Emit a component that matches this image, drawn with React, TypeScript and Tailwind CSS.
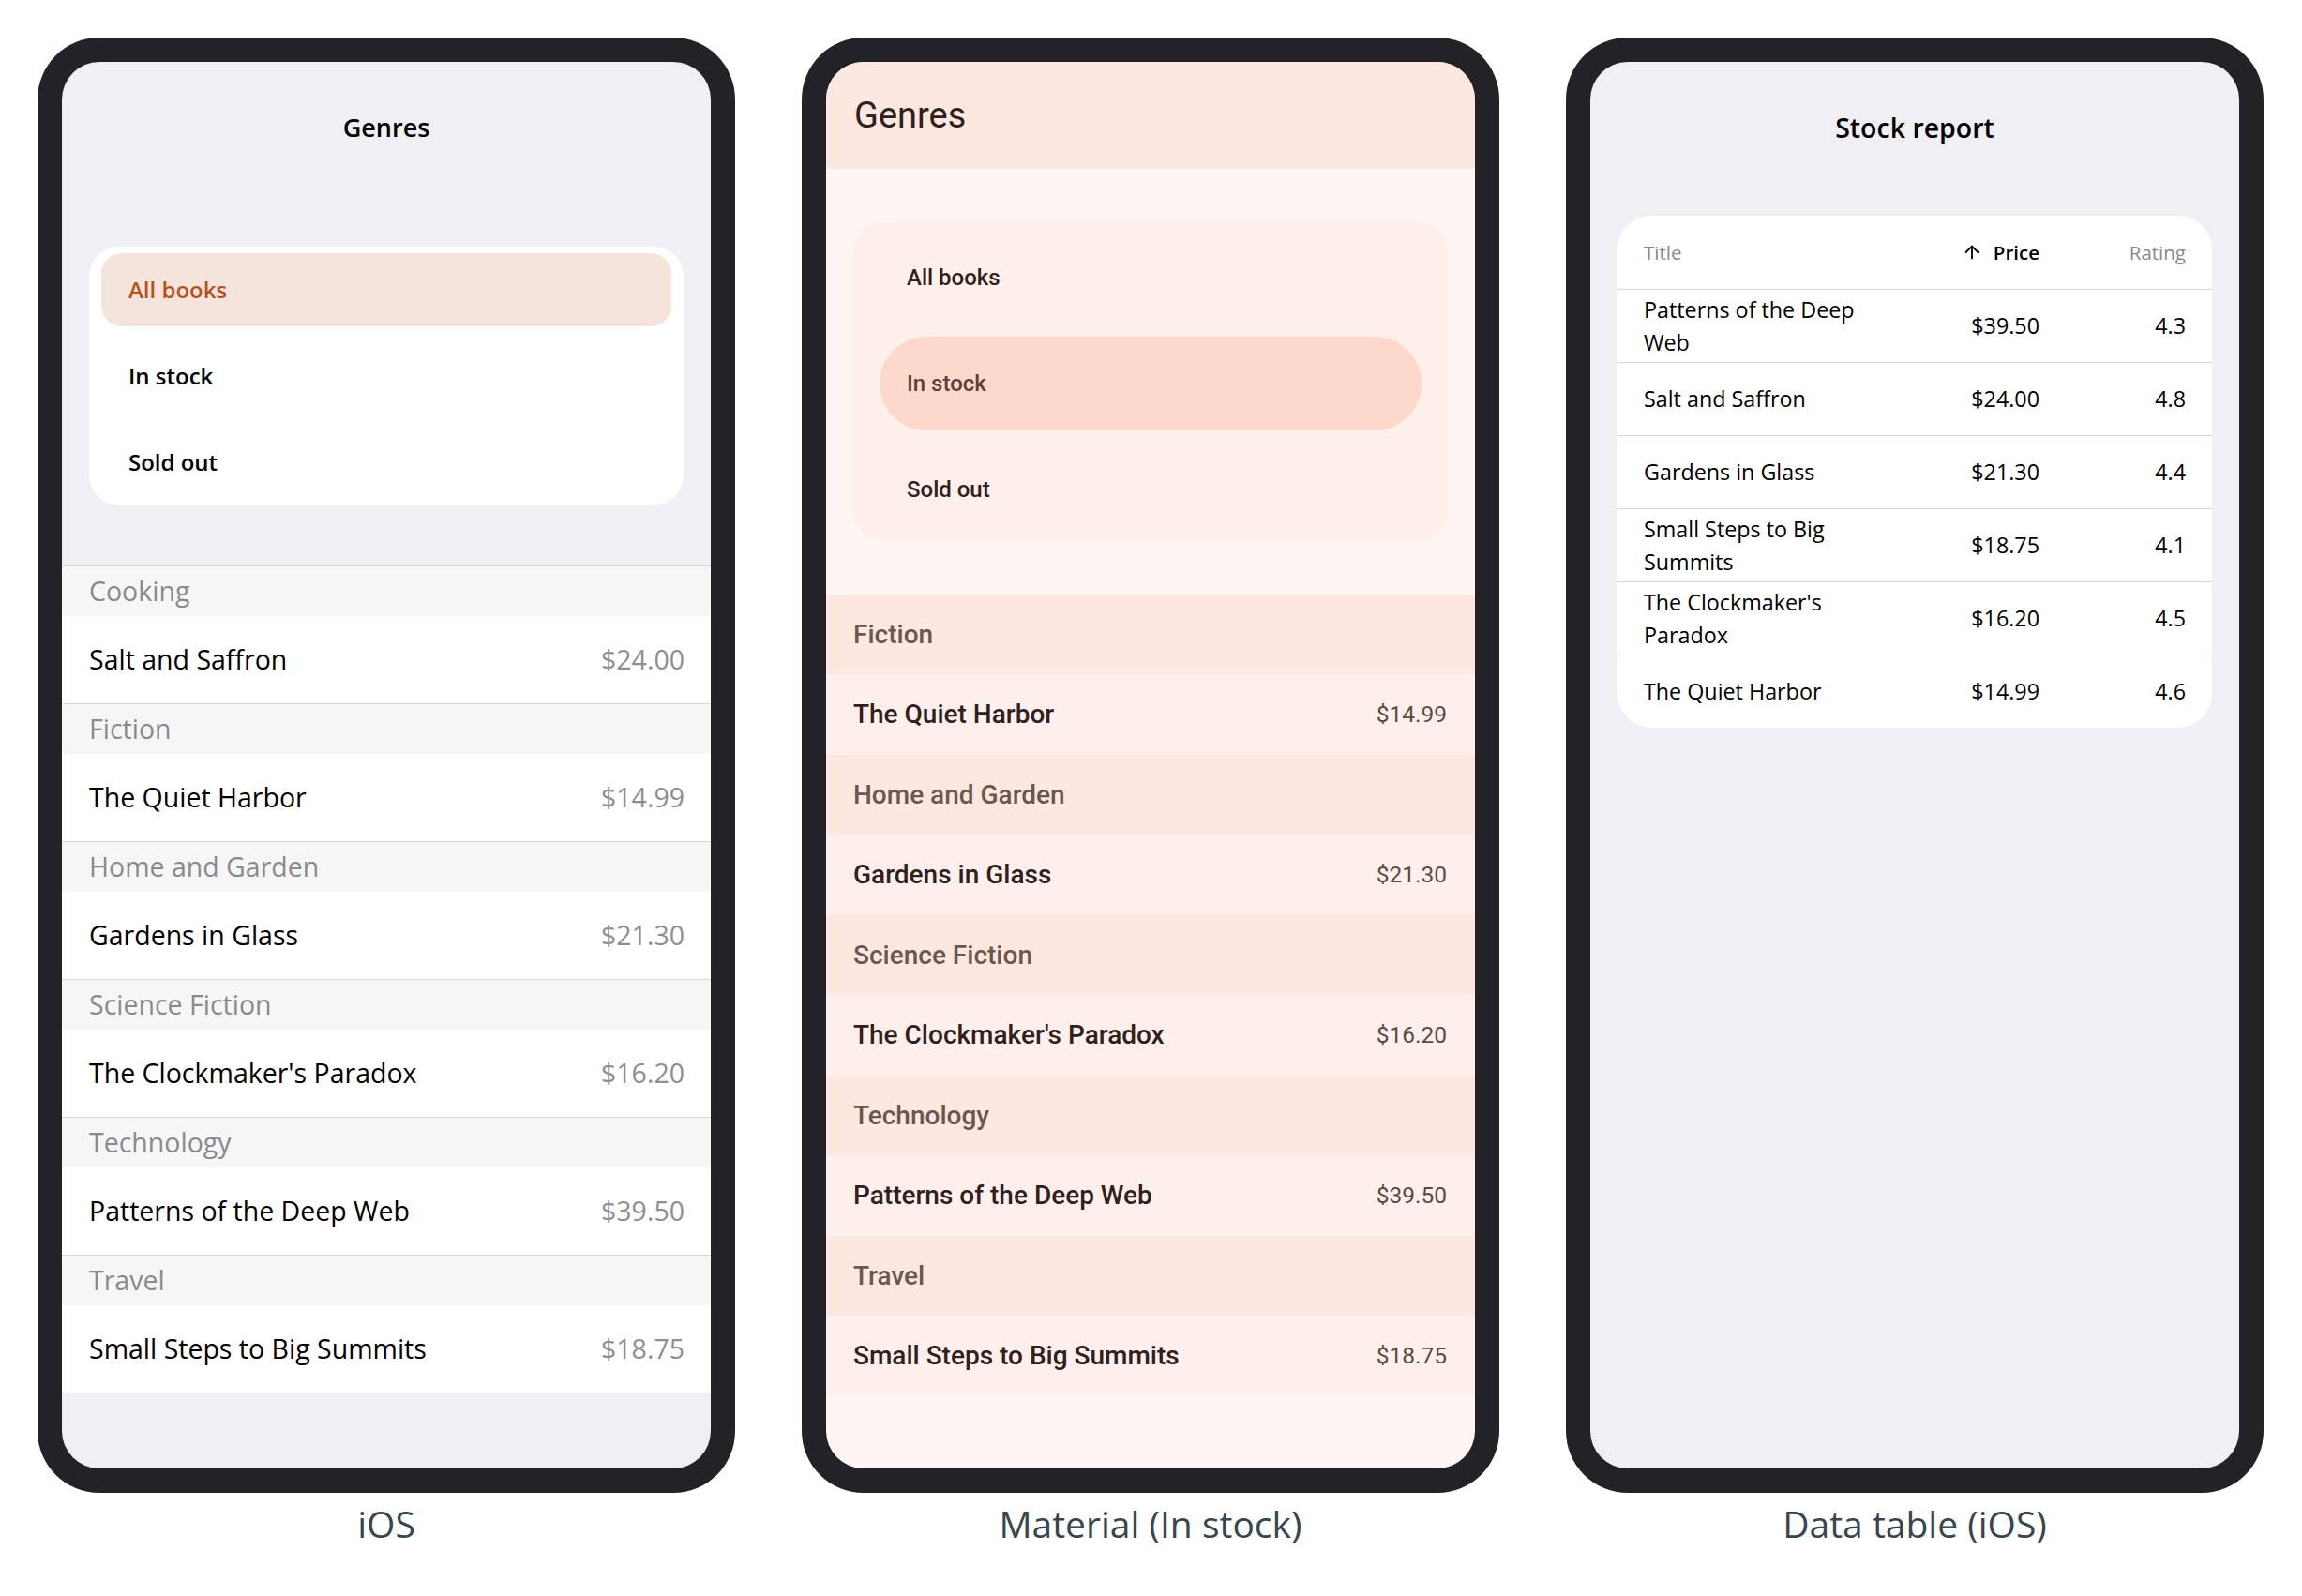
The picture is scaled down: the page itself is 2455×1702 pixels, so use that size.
import { ArrowUp } from "lucide-react";

const segoe = "font-['Open_Sans','Noto_Sans',sans-serif]";
const roboto = "font-['Roboto',sans-serif]";

const iosSections = [
  { genre: "Cooking", title: "Salt and Saffron", price: "$24.00" },
  { genre: "Fiction", title: "The Quiet Harbor", price: "$14.99" },
  { genre: "Home and Garden", title: "Gardens in Glass", price: "$21.30" },
  { genre: "Science Fiction", title: "The Clockmaker's Paradox", price: "$16.20" },
  { genre: "Technology", title: "Patterns of the Deep Web", price: "$39.50" },
  { genre: "Travel", title: "Small Steps to Big Summits", price: "$18.75" },
];

const materialSections = iosSections.slice(1);

const stock = [
  { title: "Patterns of the Deep Web", price: "$39.50", rating: "4.3" },
  { title: "Salt and Saffron", price: "$24.00", rating: "4.8" },
  { title: "Gardens in Glass", price: "$21.30", rating: "4.4" },
  { title: "Small Steps to Big Summits", price: "$18.75", rating: "4.1" },
  { title: "The Clockmaker's Paradox", price: "$16.20", rating: "4.5" },
  { title: "The Quiet Harbor", price: "$14.99", rating: "4.6" },
];

function Phone({ label, children, screen }: { label: string; children: React.ReactNode; screen: string }) {
  return (
    <div className="flex flex-col items-center">
      <div className="w-[744px] h-[1552px] bg-[#232327] rounded-[66px] p-[26px]">
        <div className={`h-full rounded-[40px] overflow-hidden ${screen}`}>{children}</div>
      </div>
      <div className={`${segoe} mt-[9px] text-[39px] leading-[48px] text-[#374650]`}>{label}</div>
    </div>
  );
}

function IosList() {
  return (
    <div className={`${segoe} flex flex-col`}>
      <div className="h-[140px] flex items-center justify-center text-[27px] font-semibold text-black">Genres</div>

      {/* filter card */}
      <div className="mx-[29px] mt-[57px] bg-white rounded-[32px] p-[7px] px-[13px] flex flex-col gap-[14px]">
        <div className="h-[78px] rounded-[22px] bg-[#f5e4dc] flex items-center px-[29px] text-[24px] font-semibold text-[#b4531f]">
          All books
        </div>
        <div className="h-[78px] flex items-center px-[29px] text-[24px] font-semibold text-black">In stock</div>
        <div className="h-[78px] flex items-center px-[29px] text-[24px] font-semibold text-black">Sold out</div>
      </div>

      {/* grouped list */}
      <div className="mt-[64px]">
        {iosSections.map((s) => (
          <div key={s.genre} className="border-t border-[#d6d6da]">
            <div className="h-[53px] bg-[#f6f6f7] flex items-center px-[29px] text-[28.5px] text-[#8a8a8e]">{s.genre}</div>
            <div className="h-[93px] bg-white flex items-center justify-between pl-[29px] pr-[28px] text-[28.5px]">
              <span className="text-black">{s.title}</span>
              <span className="text-[#8e8e93]">{s.price}</span>
            </div>
          </div>
        ))}
      </div>
    </div>
  );
}

function MaterialList() {
  return (
    <div className={`${roboto} flex flex-col`}>
      <div className="h-[114px] bg-[#fde8e0] flex items-center pl-[30px] text-[38px] text-[#2f201c]">Genres</div>

      <div className="mx-[29px] mt-[57px] bg-[#fdefea] rounded-[30px] pt-[9px] pb-[4px] px-[28px] flex flex-col gap-[13px]">
        <div className="h-[100px] flex items-center px-[29px] text-[24px] font-medium text-[#2f201c]">All books</div>
        <div className="h-[100px] rounded-full bg-[#fdd9cc] flex items-center px-[29px] text-[24px] font-medium text-[#5d4037]">
          In stock
        </div>
        <div className="h-[100px] flex items-center px-[29px] text-[24px] font-medium text-[#2f201c]">Sold out</div>
      </div>

      <div className="mt-[58px]">
        {materialSections.map((s) => (
          <div key={s.genre}>
            <div className="h-[85px] bg-[#fde8e0] flex items-center pl-[29px] text-[28px] font-medium text-[#6b5650]">{s.genre}</div>
            <div className="h-[86px] bg-[#fdf0ec] flex items-center justify-between pl-[29px] pr-[30px]">
              <span className="text-[28px] font-medium text-[#2f201c]">{s.title}</span>
              <span className="text-[24.5px] text-[#5d4a44]">{s.price}</span>
            </div>
          </div>
        ))}
      </div>
    </div>
  );
}

function StockTable() {
  return (
    <div className={`${segoe} flex flex-col`}>
      <div className="h-[140px] flex items-center justify-center text-[28.5px] font-semibold text-black">Stock report</div>

      <div className="mx-[29px] mt-[24px] bg-white rounded-[36px] overflow-hidden">
        <div className="h-[78px] grid grid-cols-[250px_1fr_156px] items-center px-[28px] text-[20.5px]">
          <span className="text-[#8a8a8e]">Title</span>
          <span className="flex items-center justify-end gap-[12px] font-semibold text-black">
            <ArrowUp size={22} strokeWidth={2} />
            Price
          </span>
          <span className="text-right text-[#8a8a8e]">Rating</span>
        </div>
        {stock.map((r) => (
          <div
            key={r.title}
            className="h-[78px] border-t border-[#d6d6da] grid grid-cols-[250px_1fr_156px] items-center px-[28px] text-[23.3px] leading-[35px] text-black"
          >
            <span>{r.title}</span>
            <span className="text-right">{r.price}</span>
            <span className="text-right">{r.rating}</span>
          </div>
        ))}
      </div>
    </div>
  );
}

export default function App() {
  return (
    <main className="bg-white w-[2455px] h-[1702px] flex gap-[71px] pl-[40px] pt-[40px]">
      <Phone label="iOS" screen="bg-[#efeff4]">
        <IosList />
      </Phone>
      <Phone label="Material (In stock)" screen="bg-[#fff6f3]">
        <MaterialList />
      </Phone>
      <Phone label="Data table (iOS)" screen="bg-[#efeff4]">
        <StockTable />
      </Phone>
    </main>
  );
}
